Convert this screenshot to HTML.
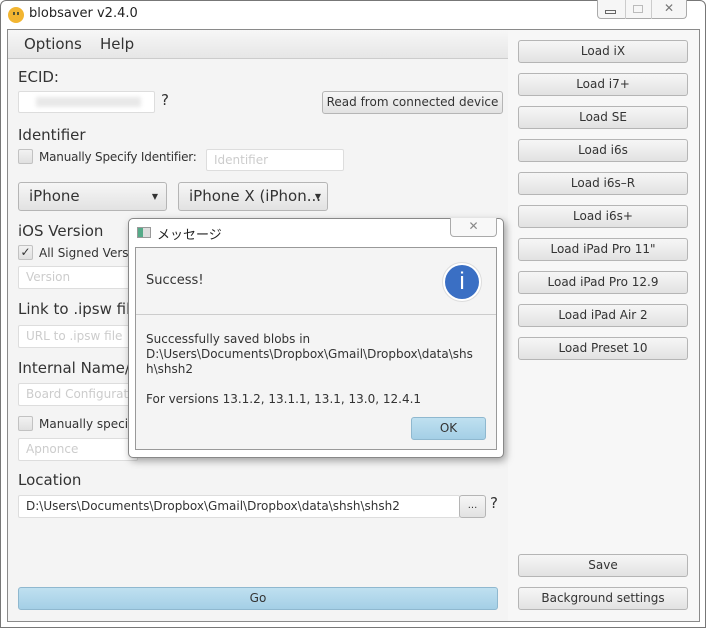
<!DOCTYPE html>
<html><head><meta charset="utf-8"><style>
*{box-sizing:border-box;margin:0;padding:0}
body{width:706px;height:628px;background:#fff;font-family:"DejaVu Sans","Liberation Sans","Noto Sans CJK JP",sans-serif;color:#333;position:relative;overflow:hidden}
.a{position:absolute}
.btn{position:absolute;border:1px solid #b5b5b5;border-radius:3px;background:linear-gradient(#f6f6f6,#e2e2e2);font-size:12px;text-align:center;color:#333}
.fld{position:absolute;background:#fff;border:1px solid #ddd;border-radius:2px;font-size:12px;color:#ccc;padding-left:7px;white-space:nowrap;overflow:hidden}
.lbl{position:absolute;font-size:15px;color:#333}
.sm{position:absolute;font-size:12px;color:#333}
.cb{position:absolute;width:15px;height:15px;border:1px solid #c2c2c2;border-radius:2px;background:linear-gradient(#f2f2f2,#e0e0e0)}
</style></head><body>
<div class="a" style="left:0;top:0;width:706px;height:628px;border:1px solid #777;border-radius:6px 6px 0 0;background:#fff"></div>
<div class="a" style="left:8px;top:7px;width:16px;height:16px;border-radius:50%;background:#f2b531"></div>
<div class="a" style="left:13px;top:12px;width:2px;height:3px;background:#553"></div>
<div class="a" style="left:17px;top:12px;width:2px;height:3px;background:#553"></div>
<div class="sm" style="left:29px;top:6px;font-size:13px;color:#222">blobsaver v2.4.0</div>
<div class="a" style="left:597px;top:0;width:90px;height:19px;border:1px solid #aaa;border-top:none;border-radius:0 0 4px 4px;background:#f6f6f6"></div>
<div class="a" style="left:625px;top:0;width:1px;height:19px;background:#ccc"></div>
<div class="a" style="left:651px;top:0;width:1px;height:19px;background:#ccc"></div>
<div class="a" style="left:605px;top:10px;width:11px;height:4px;border:1px solid #666"></div>
<div class="a" style="left:633px;top:5px;width:10px;height:8px;border:1px solid #bbb"></div>
<div class="sm" style="left:664px;top:1px;color:#777">✕</div>
<div class="a" style="left:7px;top:29px;width:693px;height:593px;border:1px solid #8a8a8a;background:#f4f4f4"></div>
<div class="a" style="left:508px;top:30px;width:191px;height:591px;background:#f7f7f7"></div>
<div class="a" style="left:8px;top:30px;width:500px;height:29px;background:linear-gradient(#f7f7f7,#e6e6e6);border-bottom:1px solid #ccc"></div>
<div class="lbl" style="left:24px;top:35px">Options</div>
<div class="lbl" style="left:100px;top:35px">Help</div>
<div class="lbl" style="left:18px;top:68px">ECID:</div>
<div class="fld" style="left:18px;top:91px;width:137px;height:22px"><div style="margin:5px 0 0 10px;width:105px;height:10px;background:#e8e8e8;filter:blur(2px)"></div></div>
<div class="lbl" style="left:161px;top:91px">?</div>
<div class="btn" style="left:322px;top:91px;width:181px;height:23px;line-height:21px">Read from connected device</div>
<div class="lbl" style="left:18px;top:126px">Identifier</div>
<div class="cb" style="left:18px;top:149px"></div>
<div class="sm" style="left:39px;top:150px;letter-spacing:-0.2px">Manually Specify Identifier:</div>
<div class="fld" style="left:206px;top:149px;width:138px;height:22px;line-height:20px">Identifier</div>
<div class="btn" style="left:18px;top:182px;width:149px;height:29px;line-height:27px;text-align:left;padding-left:10px;font-size:15px">iPhone<span style="position:absolute;right:8px;font-size:8px">▼</span></div>
<div class="btn" style="left:178px;top:182px;width:150px;height:29px;line-height:27px;text-align:left;padding-left:10px;font-size:15px">iPhone X (iPhon...<span style="position:absolute;right:6px;font-size:8px">▼</span></div>
<div class="lbl" style="left:18px;top:222px">iOS Version</div>
<div class="cb" style="left:18px;top:245px;font-size:12px;line-height:13px;text-align:center">✓</div>
<div class="sm" style="left:39px;top:246px">All Signed Versi</div>
<div class="fld" style="left:18px;top:266px;width:120px;height:23px;line-height:21px">Version</div>
<div class="lbl" style="left:18px;top:300px">Link to .ipsw fil</div>
<div class="fld" style="left:18px;top:325px;width:120px;height:23px;line-height:21px">URL to .ipsw file</div>
<div class="lbl" style="left:18px;top:359px">Internal Name/</div>
<div class="fld" style="left:18px;top:383px;width:120px;height:23px;line-height:21px">Board Configurati</div>
<div class="cb" style="left:18px;top:416px"></div>
<div class="sm" style="left:39px;top:417px">Manually specif</div>
<div class="fld" style="left:18px;top:438px;width:120px;height:23px;line-height:21px">Apnonce</div>
<div class="lbl" style="left:18px;top:471px">Location</div>
<div class="fld" style="left:18px;top:495px;width:442px;height:23px;line-height:21px;color:#333;font-size:12px">D:\Users\Documents\Dropbox\Gmail\Dropbox\data\shsh\shsh2</div>
<div class="btn" style="left:459px;top:495px;width:27px;height:23px;line-height:19px;font-size:10px">...</div>
<div class="lbl" style="left:490px;top:494px">?</div>
<div class="a" style="left:18px;top:587px;width:480px;height:23px;border:1px solid #8fb8cf;border-radius:3px;background:linear-gradient(#bfe0f0,#a4cfe6);font-size:12px;text-align:center;line-height:21px">Go</div>
<div class="btn" style="left:518px;top:40px;width:170px;height:23px;line-height:21px">Load iX</div>
<div class="btn" style="left:518px;top:73px;width:170px;height:23px;line-height:21px">Load i7+</div>
<div class="btn" style="left:518px;top:106px;width:170px;height:23px;line-height:21px">Load SE</div>
<div class="btn" style="left:518px;top:139px;width:170px;height:23px;line-height:21px">Load i6s</div>
<div class="btn" style="left:518px;top:172px;width:170px;height:23px;line-height:21px">Load i6s–R</div>
<div class="btn" style="left:518px;top:205px;width:170px;height:23px;line-height:21px">Load i6s+</div>
<div class="btn" style="left:518px;top:238px;width:170px;height:23px;line-height:21px">Load iPad Pro 11"</div>
<div class="btn" style="left:518px;top:271px;width:170px;height:23px;line-height:21px">Load iPad Pro 12.9</div>
<div class="btn" style="left:518px;top:304px;width:170px;height:23px;line-height:21px">Load iPad Air 2</div>
<div class="btn" style="left:518px;top:337px;width:170px;height:23px;line-height:21px">Load Preset 10</div>
<div class="btn" style="left:518px;top:554px;width:170px;height:23px;line-height:21px">Save</div>
<div class="btn" style="left:518px;top:587px;width:170px;height:23px;line-height:21px">Background settings</div>
<div class="a" style="left:128px;top:218px;width:376px;height:240px;border:1px solid #888;border-radius:5px;background:#fff;box-shadow:2px 3px 8px rgba(0,0,0,.35)"></div>
<div class="a" style="left:137px;top:227px;width:14px;height:11px;border:1px solid #999;background:linear-gradient(90deg,#5a8 0 40%,#ddd 40%)"></div>
<div class="sm" style="left:157px;top:224px;font-size:13px;color:#222">メッセージ</div>
<div class="a" style="left:450px;top:218px;width:47px;height:19px;border:1px solid #aaa;border-top:none;border-radius:0 0 4px 4px;background:#f8f8f8;text-align:center;font-size:12px;color:#888;line-height:17px">✕</div>
<div class="a" style="left:135px;top:247px;width:362px;height:203px;border:1px solid #999;background:#f4f4f4"></div>
<div class="a" style="left:136px;top:314px;width:360px;height:1px;background:#ccc"></div>
<div class="sm" style="left:146px;top:273px;font-size:13px">Success!</div>
<div class="a" style="left:442px;top:262px;width:40px;height:40px;border-radius:50%;background:#fff;border:1px solid #ddd"></div>
<div class="a" style="left:445px;top:265px;width:34px;height:34px;border-radius:50%;background:#3a6fc4;color:#fff;text-align:center;font-size:24px;line-height:33px;font-family:'Liberation Sans',sans-serif">i</div>
<div class="sm" style="left:146px;top:332px;font-size:12px;line-height:15px">Successfully saved blobs in<br>D:\Users\Documents\Dropbox\Gmail\Dropbox\data\shs<br>h\shsh2<br><br>For versions 13.1.2, 13.1.1, 13.1, 13.0, 12.4.1</div>
<div class="a" style="left:411px;top:417px;width:75px;height:23px;border:1px solid #8fb8cf;border-radius:3px;background:linear-gradient(#bfe0f0,#a4cfe6);font-size:12px;text-align:center;line-height:21px">OK</div>
</body></html>
